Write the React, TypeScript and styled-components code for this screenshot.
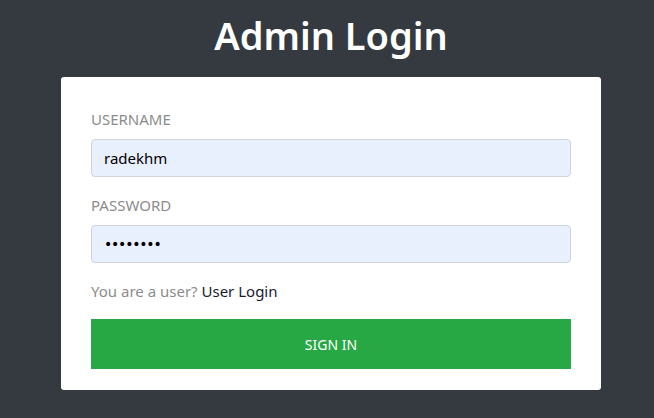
import React from "react";
import styled, { createGlobalStyle } from "styled-components";

const Global = createGlobalStyle`
  html, body { margin: 0; padding: 0; background: #343a40; }
  body { font-family: "Noto Sans", "Open Sans", Arial, sans-serif; }
  * { box-sizing: border-box; }
`;

const Page = styled.div`
  width: 654px;
  height: 418px;
  background: #343a40;
  display: flex;
  flex-direction: column;
  align-items: center;
  padding: 12px 0 0 8px;
`;

const Title = styled.h1`
  margin: 0 0 19px;
  font-size: 38px;
  line-height: 46px;
  font-weight: 600;
  color: #ffffff;
`;

const Card = styled.form`
  width: 540px;
  background: #ffffff;
  border-radius: 3px;
  padding: 30px 30px 21px;
  display: flex;
  flex-direction: column;
`;

const Group = styled.div`
  display: flex;
  flex-direction: column;
  margin-bottom: 16px;
`;

const Label = styled.label`
  font-size: 15px;
  line-height: 24px;
  color: #8c8c8c;
  margin-bottom: 8px;
`;

const Input = styled.input<{ $secret?: boolean }>`
  height: 38px;
  width: 100%;
  padding: 6px 12px;
  font-family: ${(p) => (p.$secret ? '"DejaVu Sans", sans-serif' : "inherit")};
  font-size: ${(p) => (p.$secret ? "14px" : "15px")};
  letter-spacing: ${(p) => (p.$secret ? "-1.2px" : "normal")};
  color: #000;
  background: #e8f0fe;
  border: 1px solid #ced4da;
  border-radius: 4px;
  outline: none;
`;

const Note = styled.p`
  margin: 0 0 16px;
  font-size: 15px;
  line-height: 24px;
  color: #8c8c8c;
`;

const Link = styled.a`
  color: #1a1a2e;
  text-decoration: none;
`;

const Button = styled.button`
  height: 50px;
  width: 100%;
  border: none;
  border-radius: 0;
  background: #28a745;
  color: #ffffff;
  font-family: inherit;
  font-size: 14px;
  text-transform: uppercase;
`;

export default function App() {
  return (
    <>
      <Global />
      <Page>
        <Title>Admin Login</Title>
        <Card onSubmit={(e) => e.preventDefault()}>
          <Group>
            <Label>USERNAME</Label>
            <Input defaultValue="radekhm" />
          </Group>
          <Group>
            <Label>PASSWORD</Label>
            <Input $secret type="password" defaultValue="password" />
          </Group>
          <Note>
            You are a user? <Link href="#">User Login</Link>
          </Note>
          <Button type="submit">Sign in</Button>
        </Card>
      </Page>
    </>
  );
}
